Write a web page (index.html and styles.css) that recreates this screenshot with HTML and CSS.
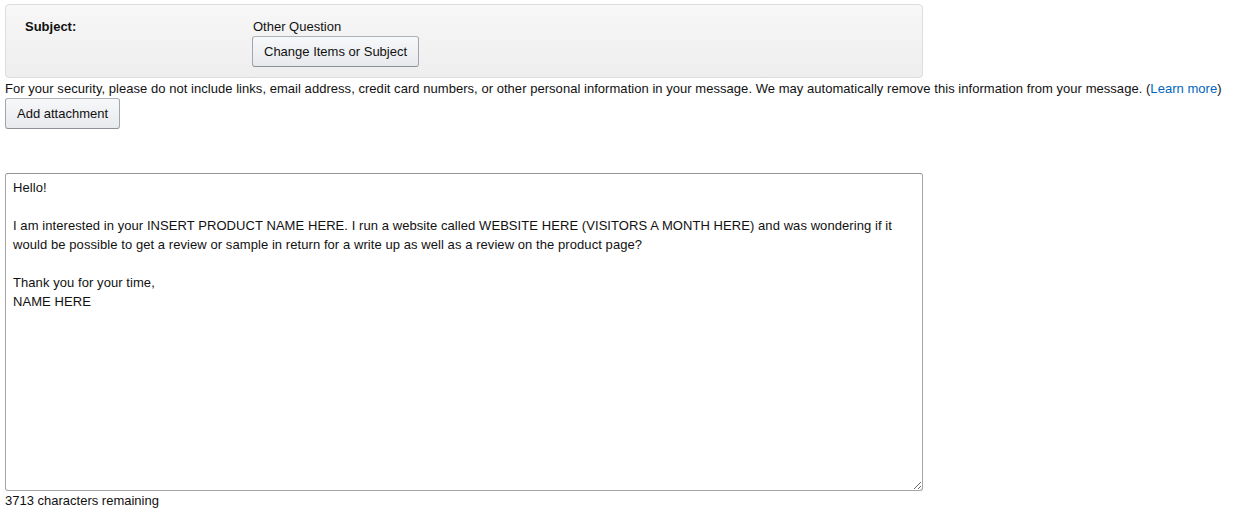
FILE: index.html
```html
<!DOCTYPE html>
<html lang="en">
<head>
  <meta charset="UTF-8">
  <title>Contact Seller</title>
  <link rel="stylesheet" href="styles.css">
</head>
<body>
  <div class="subject-box">
    <div class="subject-label">Subject:</div>
    <div class="subject-value">
      <div>Other Question</div>
      <button class="btn">Change Items or Subject</button>
    </div>
  </div>

  <p class="notice">For your security, please do not include links, email address, credit card numbers, or other personal information in your message. We may automatically remove this information from your message. (<a href="#">Learn more</a>)</p>
  <button class="btn">Add attachment</button>

  <textarea class="message">Hello!

I am interested in your INSERT PRODUCT NAME HERE. I run a website called WEBSITE HERE (VISITORS A MONTH HERE) and was wondering if it would be possible to get a review or sample in return for a write up as well as a review on the product page?

Thank you for your time,
NAME HERE</textarea>
  <div class="counter">3713 characters remaining</div>
</body>
</html>
```

FILE: styles.css
```css
body {
  margin: 0;
  padding: 4px 5px 0;
  font-family: "Liberation Sans", Arial, sans-serif;
  font-size: 13px;
  line-height: 16px;
  color: #111;
  background: #fff;
}

.subject-box {
  box-sizing: border-box;
  width: 918px;
  height: 74px;
  display: flex;
  padding: 14px 19px 0;
  border: 1px solid #ddd;
  border-radius: 4px;
  background: linear-gradient(#f7f7f7, #eeeeee);
}

.subject-label {
  width: 228px;
  font-weight: bold;
}

.subject-value .btn {
  margin-top: 1px;
  margin-left: -1px;
}

.btn {
  display: block;
  height: 31px;
  padding: 0 11px;
  font-family: inherit;
  font-size: 13px;
  color: #111;
  border: 1px solid #adb1b8;
  border-color: #adb1b8 #a2a6ac #8d9096;
  border-radius: 3px;
  background: linear-gradient(#f7f8fa, #e7e9ec);
  cursor: pointer;
}

.notice {
  margin: 3px 0 1px;
  white-space: nowrap;
  letter-spacing: 0.04px;
}

.notice a {
  color: #0066c0;
  text-decoration: none;
}

.message {
  display: block;
  box-sizing: border-box;
  width: 918px;
  height: 318px;
  margin-top: 44px;
  padding: 4px 7px;
  font-family: inherit;
  font-size: 13px;
  line-height: 19px;
  letter-spacing: 0.07px;
  color: #111;
  border: 1px solid #a6a6a6;
  border-top-color: #949494;
  border-radius: 3px;
  resize: both;
  outline: none;
}

.counter {
  margin-top: 2px;
}
```
